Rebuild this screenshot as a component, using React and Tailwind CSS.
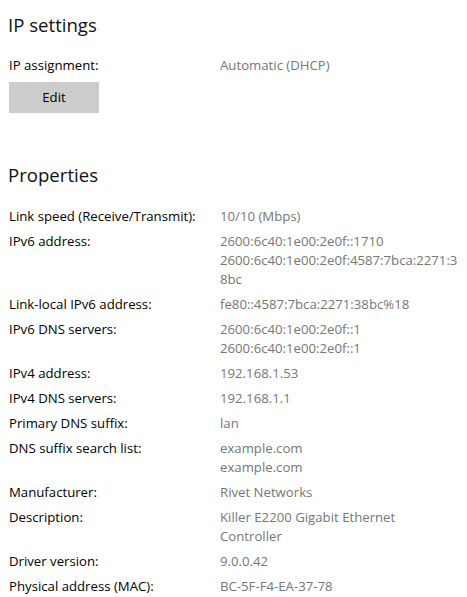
import React from "react";

const rows = [
  ["Link speed (Receive/Transmit):", ["10/10 (Mbps)"]],
  ["IPv6 address:", ["2600:6c40:1e00:2e0f::1710", "2600:6c40:1e00:2e0f:4587:7bca:2271:3", "8bc"]],
  ["Link-local IPv6 address:", ["fe80::4587:7bca:2271:38bc%18"]],
  ["IPv6 DNS servers:", ["2600:6c40:1e00:2e0f::1", "2600:6c40:1e00:2e0f::1"]],
  ["IPv4 address:", ["192.168.1.53"]],
  ["IPv4 DNS servers:", ["192.168.1.1"]],
  ["Primary DNS suffix:", ["lan"]],
  ["DNS suffix search list:", ["example.com", "example.com"]],
  ["Manufacturer:", ["Rivet Networks"]],
  ["Description:", ["Killer E2200 Gigabit Ethernet", "Controller"]],
  ["Driver version:", ["9.0.0.42"]],
  ["Physical address (MAC):", ["BC-5F-F4-EA-37-78"]],
];

export default function App() {
  return (
    <div
      className="w-[467px] h-[597px] bg-white overflow-hidden text-black"
      style={{ fontFamily: '"Segoe UI", "Open Sans", sans-serif' }}
    >
      <div className="pl-[8px] pt-[11px]">
        <h1 className="text-[18.6px] leading-[28px] font-normal text-[#111111]">IP settings</h1>
        <div className="mt-[17px] flex text-[13.2px] leading-[19px] pl-[1px]">
          <div className="w-[211px]">IP assignment:</div>
          <div className="text-[#767676]">Automatic (DHCP)</div>
        </div>
        <button className="mt-[7px] ml-[1px] w-[90px] h-[31px] bg-[#cccccc] text-[13.2px] leading-[19px] text-black">
          Edit
        </button>
        <h2 className="mt-[48px] text-[18.6px] leading-[28px] font-normal text-[#111111]">Properties</h2>
        <div className="mt-[18px] pl-[1px] flex flex-col gap-[6px] text-[13.2px] leading-[19px]">
          {rows.map(([label, values]) => (
            <div key={label} className="flex">
              <div className="w-[211px] shrink-0 whitespace-nowrap">{label}</div>
              <div className="flex flex-col text-[#767676]">
                {values.map((v, i) => (
                  <div key={i} className="whitespace-nowrap">{v}</div>
                ))}
              </div>
            </div>
          ))}
        </div>
      </div>
    </div>
  );
}
